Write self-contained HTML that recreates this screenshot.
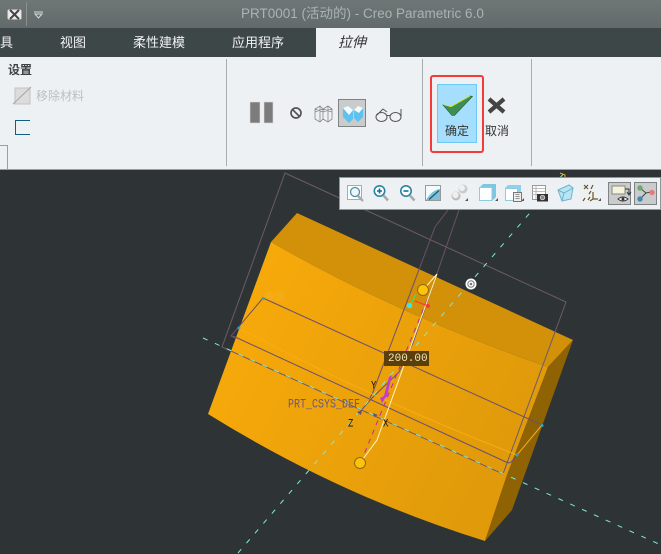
<!DOCTYPE html>
<html>
<head>
<meta charset="utf-8">
<style>
html,body{margin:0;padding:0;background:#2e3436}
body{width:661px;height:554px;overflow:hidden;position:relative;font-family:"Liberation Sans","Noto Sans CJK SC",sans-serif}
.a{position:absolute;white-space:nowrap;line-height:1}
.tab{top:36px;font-size:13px;color:#f0f3f3}
.sep{position:absolute;width:1px;top:59px;height:107px;background:#a9adae}
svg{position:absolute;left:0;top:0}
</style>
</head>
<body>
<div class="a" style="left:0;top:0;width:661px;height:28px;background:linear-gradient(#6f7676,#636a6a)"></div>
<div class="a" style="left:0;top:28px;width:661px;height:29px;background:#3e4748"></div>
<div class="a" style="left:316px;top:28px;width:74px;height:29px;background:#edf1f3"></div>
<div class="a" style="left:0;top:57px;width:661px;height:112px;background:#edf1f3"></div>
<div class="a" style="left:0;top:169px;width:661px;height:1px;background:#9a9e9f"></div>
<div class="a" style="left:241px;top:7px;font-size:13.5px;color:#aab3b5">PRT0001 (活动的) - Creo Parametric 6.0</div>
<div class="a tab" style="left:0">具</div>
<div class="a tab" style="left:60px">视图</div>
<div class="a tab" style="left:133px">柔性建模</div>
<div class="a tab" style="left:232px">应用程序</div>
<div class="a tab" style="left:338px;color:#333;font-style:italic;font-size:14px;top:35px">拉伸</div>
<div class="a" style="left:8px;top:64px;font-size:12px;font-weight:bold;color:#3c4244">设置</div>
<div class="a" style="left:36px;top:90px;font-size:12px;color:#bcbfc0">移除材料</div>
<div class="sep" style="left:226px"></div>
<div class="sep" style="left:422px"></div>
<div class="sep" style="left:531px"></div>
<div class="a" style="left:437px;top:84px;width:38px;height:57px;background:#a5dffd;border:1px solid #6cc8f5"></div>
<div class="a" style="left:430px;top:75px;width:50px;height:74px;border:2px solid #f43a3a;border-radius:3px"></div>
<div class="a" style="left:338px;top:99px;width:26px;height:26px;background:#c9cbcc;border:1px solid #7f8384"></div>

<svg width="661" height="554" viewBox="0 0 661 554">
<!-- title icons -->
<rect x="8" y="10" width="13" height="9" rx="1" fill="#eee" stroke="#ddd"/>
<path d="M10 10l9 9M19 10l-9 9" stroke="#444" stroke-width="2"/>
<rect x="26" y="2" width="1" height="24" fill="#8b9191"/>
<path d="M34 12h9M35 14h7l-3.500 4z" fill="none" stroke="#d5d9d9" stroke-width="1"/>
<!-- ribbon icons -->
<path d="M15 88h15v16h-15z" fill="#dcdcdc" stroke="#c2c2c2"/>
<path d="M13 104L31 87" stroke="#aaa" stroke-width="1.200"/>
<path d="M30 120.500H15.500V134.500H30" fill="none" stroke="#0c6082" stroke-width="1"/>
<path d="M0 145.500H7.500V169" fill="none" stroke="#9a9e9f"/>
<rect x="250" y="102" width="10" height="21" fill="#7c7c7c" stroke="#ddd" stroke-width=".6"/>
<rect x="264" y="102" width="9" height="21" fill="#7c7c7c" stroke="#ddd" stroke-width=".6"/>
<circle cx="296" cy="113" r="5" fill="none" stroke="#555" stroke-width="1.700"/>
<path d="M292.500 109.500l7 7" stroke="#555" stroke-width="1.700"/>
<g fill="none" stroke="#888" stroke-width=".8">
<path d="M315 109l5-3 3 3v10l-3 3-5-3zM320 106v16M315 109l8 3M323 109l-8 3M323 109l5-3 4 3v10l-4 3-5-3M328 106v16M323 112l9-3M332 112l-9-3"/>
</g>
<path d="M343 108l5-2 5 4v9l-4 4-6-6z M354 110l4-4 5 2v9l-5 5-4-4z" fill="#5ec2ee"/>
<path d="M343 108l5-2 5 4-4 5zM354 110l4-4 5 2-4 5z" fill="#f4fbfe"/>
<g fill="none" stroke="#555" stroke-width="1">
<path d="M376 117a5.500 4.500 0 1 0 11 0a5.500 4.500 0 1 0-11 0zM390 117a5.500 4.500 0 1 0 11 0a5.500 4.500 0 1 0-11 0zM387 115.500h3"/>
<path d="M377 115l6-6 4 3M401 117v-8"/>
</g>
<path d="M443 105L451 107L470 96L472.500 96.500L454.500 115.500L452 115.500Z" fill="#3b8f55" stroke="#2c5a3c" stroke-width=".6"/>
<path d="M444 104.800L451 106.800L470 96" fill="none" stroke="#d3e81a" stroke-width=".9"/>
<path d="M489 99L504 112M504 99L489 112" stroke="#444" stroke-width="4.200" fill="none"/>
</svg>
<div class="a" style="left:445px;top:125px;font-size:12px;color:#333">确定</div>
<div class="a" style="left:485px;top:125px;font-size:12px;color:#333">取消</div>

<!-- viewport -->
<svg width="661" height="554" viewBox="0 0 661 554" style="top:0">
<defs>
<linearGradient id="f" x1="0" y1="0" x2="1" y2=".45"><stop offset="0" stop-color="#fbac0a"/><stop offset="1" stop-color="#e09a0a"/></linearGradient>
</defs>
<path d="M297 213L573 340L548 367Q400 316 271 242Z" fill="#d29108"/>
<path d="M271 242Q400 316 548 367L507 475L485 541Q340 496 208 414Z" fill="url(#f)"/>
<path d="M573 340L548 367L507 475L485 541L512 510Z" fill="#8f6304"/>
<text x="265" y="300" font-size="10" fill="#f4b020" font-family="'Noto Sans CJK SC',sans-serif">曲面</text>
<path d="M285 173L566 302L503 474L222 347Z" fill="none" stroke="#6e5a66" stroke-width="1"/>
<path d="M263 298L231 336L235 338M263 298L542 425L512 461Q510 464 506 462L233 336" fill="none" stroke="#6c4f6c" stroke-width="1"/>
<path d="M448 210L435 227L373 392L370 398M459 210L413 343L399 372L372 398L358 414" fill="none" stroke="#6c4f6c" stroke-width="1"/>
<path d="M239 328Q370 398 517 455L542 425" fill="none" stroke="#f8ad12" stroke-width="1"/>
<path d="M203 338L661 545M238 553L565 172" fill="none" stroke="#7fe9dc" stroke-width="1" stroke-dasharray="5 8"/>
<path d="M427 300L363 457" fill="none" stroke="#c02a9c" stroke-width="1" stroke-dasharray="5 5"/>
<path d="M423 290L437 274L377 440L360 463" fill="none" stroke="#fff6c0" stroke-width="1"/>
<path d="M392 375L387 397L386 397L382 403L380 398L384 396L389 377Z" fill="#c13fd0"/>
<circle cx="423" cy="290" r="5.500" fill="#fdc20c" stroke="#8a6a10"/>
<circle cx="360" cy="463" r="5.500" fill="#fdc20c" stroke="#8a6a10"/>
<path d="M410 305L416 294" stroke="#3fe06f"/>
<path d="M415 301L428 306" stroke="#f33" />
<circle cx="409.500" cy="305.500" r="2.800" fill="#39e6ea"/>
<circle cx="428" cy="306" r="2" fill="#f33"/>
<circle cx="263" cy="298.500" r="1.500" fill="#2aa8c0"/><circle cx="239" cy="328" r="1.500" fill="#2aa8c0"/><circle cx="542" cy="425.500" r="1.500" fill="#2aa8c0"/><circle cx="517" cy="455" r="1.500" fill="#2aa8c0"/>
<circle cx="471" cy="284" r="5.500" fill="#fff"/>
<circle cx="471" cy="284" r="3.200" fill="none" stroke="#777"/>
<circle cx="471" cy="284" r="1.300" fill="#777"/>
<path d="M560 173l5 2v3" stroke="#f2a818" fill="none"/>
<path d="M357 412l5-2-1 5zM373 413l5 2-4 2z" fill="#6c4f6c"/>
<rect x="384" y="351" width="45" height="15" fill="#5a3f0c"/>
</svg>
<div class="a" style="left:388px;top:353px;font:11px 'Liberation Mono',monospace;color:#f4e6b5">200.00</div>
<div class="a" style="left:288px;top:400px;font:10px 'Liberation Mono',monospace;color:#6a5880;transform:scaleY(1.25)">PRT_CSYS_DEF</div>
<div class="a" style="left:371px;top:381px;font:9px 'Liberation Mono',monospace;color:#111;transform:scaleY(1.2)">Y</div>
<div class="a" style="left:348px;top:419px;font:9px 'Liberation Mono',monospace;color:#111;transform:scaleY(1.2)">Z</div>
<div class="a" style="left:383px;top:419px;font:9px 'Liberation Mono',monospace;color:#111;transform:scaleY(1.2)">X</div>

<!-- floating toolbar -->
<div class="a" style="left:339px;top:177px;width:320px;height:31px;background:#edf1f3;border:1px solid #8f9696"></div>
<svg width="661" height="554" viewBox="0 0 661 554">
<rect x="347.500" y="185.500" width="14" height="14" fill="#fff" stroke="#aaa"/>
<circle cx="355" cy="192" r="4.500" fill="#eef8fc" stroke="#4d90aa" stroke-width="1.300"/>
<path d="M358 196l5 5" stroke="#aaa" stroke-width="2.500"/>
<circle cx="379.500" cy="191" r="5.200" fill="#fff" stroke="#2a83a5" stroke-width="1.600"/>
<path d="M377 191h5M379.500 188.500v5" stroke="#0f6f96" stroke-width="1.600"/>
<path d="M383.500 195.500l4.500 5" stroke="#aaa" stroke-width="2.500"/>
<circle cx="406" cy="191" r="5.200" fill="#fff" stroke="#2a83a5" stroke-width="1.600"/>
<path d="M403.500 191h5" stroke="#0f6f96" stroke-width="1.600"/>
<path d="M410 195.500l4.500 5" stroke="#aaa" stroke-width="2.500"/>
<rect x="425.500" y="185.500" width="15" height="15" fill="#7fc0d8" stroke="#999"/>
<path d="M426 186h14v3q-8 1-14 11z" fill="#f4fbfd"/>
<path d="M429 199.500l10-9" stroke="#1c5d78" stroke-width="1.300"/>
<circle cx="456" cy="196" r="4.500" fill="#bdbdbd"/><circle cx="455.500" cy="195" r="3.200" fill="#eee"/>
<circle cx="463" cy="189" r="4.500" fill="#cacaca"/><circle cx="462" cy="188" r="3" fill="#f0f0f0"/>
<path d="M468 201v-3l-3 3zM498 201v-3l-3 3zM524 201v-3l-3 3zM601 201v-3l-3 3z" fill="#555"/>
<path d="M479 188l4-4h13v13l-4 4h-13z" fill="#7fc6e2"/><rect x="479.500" y="187.500" width="12.500" height="13" fill="#fdfeff" stroke="#8fcbe0"/>
<path d="M505 188l3-3h13v12h-16z" fill="#8fd0ea"/><rect x="505.500" y="188.500" width="12" height="12" fill="#fdfeff" stroke="#8fcbe0"/>
<rect x="513.500" y="192.500" width="8" height="9" fill="#eee" stroke="#777"/>
<path d="M515.500 194.500h4M515.500 196.500h4M515.500 198.500h4" stroke="#777" stroke-width=".7"/>
<rect x="532.500" y="185.500" width="13" height="14" fill="#fff" stroke="#999"/>
<path d="M532 188.500h13M532 191.500h13M532 194.500h13M536 185v14" stroke="#aaa" stroke-width=".8"/>
<rect x="537" y="194" width="11" height="7.500" fill="#333"/><circle cx="542.500" cy="197.500" r="2.300" fill="#888" stroke="#eee" stroke-width=".7"/>
<path d="M558 190l11-5 4 3-2 11-9 2z" fill="#b9e4f2" stroke="#6cb5cf"/>
<path d="M558 190l6 3 9-5M564 193l-2 8" stroke="#6cb5cf" fill="none"/>
<path d="M584 185l4 4M588 185l-4 4M593 185l-2 4M589 194l2-3M583 201l2-3M588 200l2-3M593 192v7h5M593 199l-3 2" stroke="#6b5526" stroke-width="1.200" fill="none"/>
<rect x="608.500" y="182.500" width="22" height="22" fill="#c9cbcc" stroke="#7f8384"/>
<rect x="612" y="186" width="13" height="8" fill="#f7f2de" stroke="#8a8a7c"/>
<path d="M625 189h4v6M627 192l2 3 2-3" stroke="#333" fill="none"/>
<path d="M618 199q5-4 10 0q-5 4-10 0z" fill="#fff" stroke="#333"/><circle cx="623" cy="199" r="1.500" fill="#333"/>
<rect x="634.500" y="182.500" width="22" height="22" fill="#c9cbcc" stroke="#7f8384"/>
<path d="M640 188l6 5 5-1M646 193l-6 6" stroke="#444" fill="none"/>
<circle cx="640" cy="188" r="2.700" fill="#6fa86a"/><circle cx="652" cy="192.500" r="2.700" fill="#e47a7a"/><circle cx="640" cy="199" r="2.700" fill="#3f89b5"/>
</svg>
</body>
</html>
